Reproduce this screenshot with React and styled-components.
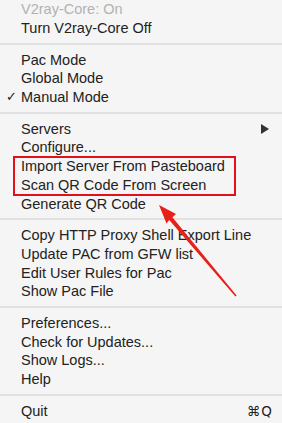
import { Fragment } from "react";
import styled, { createGlobalStyle } from "styled-components";

const GlobalStyle = createGlobalStyle`
  html, body {
    margin: 0;
    padding: 0;
    background: #f5f5f5;
  }
  body {
    font-family: "Liberation Sans", Arial, sans-serif;
    -webkit-font-smoothing: antialiased;
  }
`;

const Menu = styled.div`
  position: relative;
  width: 282px;
  height: 423px;
  display: flex;
  flex-direction: column;
  background: #f5f5f5;
  overflow: hidden;
`;

const Item = styled.div`
  height: 18.75px;
  display: flex;
  align-items: center;
  padding: 0 8px 0 21px;
  position: relative;
  font-size: 14.5px;
  color: ${(p) => (p.$disabled ? "#b2b2b2" : "#222")};
  white-space: nowrap;
`;

const Label = styled.span`
  flex: 1;
`;

const Check = styled.span`
  position: absolute;
  left: 6px;
  top: 1px;
  font-family: "DejaVu Sans", sans-serif;
  font-size: 13px;
  color: #222;
`;

const Shortcut = styled.span`
  font-family: "DejaVu Sans", "Liberation Sans", sans-serif;
  font-size: 13.5px;
  color: #222;
  letter-spacing: 1px;
  margin-right: 1px;
`;

const SubArrow = styled.span`
  width: 0;
  height: 0;
  margin-right: 5px;
  border-top: 5px solid transparent;
  border-bottom: 5px solid transparent;
  border-left: 8px solid #333;
`;

const Separator = styled.div`
  height: 12.75px;
  display: flex;
  align-items: center;

  &::before {
    content: "";
    display: block;
    width: 100%;
    height: 2px;
    background: #e1e1e1;
  }
`;

const Highlight = styled.div`
  position: relative;
  display: flex;
  flex-direction: column;

  &::after {
    content: "";
    position: absolute;
    left: 13px;
    width: 223px;
    top: -0.5px;
    bottom: -1.5px;
    box-sizing: border-box;
    border: 2px solid #e3101b;
    pointer-events: none;
  }
`;

const Overlay = styled.svg`
  position: absolute;
  top: 0;
  left: 0;
  pointer-events: none;
`;

const groups = [
  [
    { label: "V2ray-Core: On", disabled: true },
    { label: "Turn V2ray-Core Off" },
  ],
  [
    { label: "Pac Mode" },
    { label: "Global Mode" },
    { label: "Manual Mode", checked: true },
  ],
  [
    { label: "Servers", submenu: true },
    { label: "Configure..." },
    { label: "Import Server From Pasteboard", marked: true },
    { label: "Scan QR Code From Screen", marked: true },
    { label: "Generate QR Code" },
  ],
  [
    { label: "Copy HTTP Proxy Shell Export Line" },
    { label: "Update PAC from GFW list" },
    { label: "Edit User Rules for Pac" },
    { label: "Show Pac File" },
  ],
  [
    { label: "Preferences..." },
    { label: "Check for Updates..." },
    { label: "Show Logs..." },
    { label: "Help" },
  ],
  [{ label: "Quit", shortcut: "⌘Q" }],
];

function MenuItem({ item }) {
  return (
    <Item $disabled={item.disabled}>
      {item.checked && <Check>✓</Check>}
      <Label>{item.label}</Label>
      {item.submenu && <SubArrow />}
      {item.shortcut && <Shortcut>{item.shortcut}</Shortcut>}
    </Item>
  );
}

function Group({ items }) {
  const out = [];
  let i = 0;
  while (i < items.length) {
    if (items[i].marked) {
      const marked = [];
      while (i < items.length && items[i].marked) {
        marked.push(items[i]);
        i++;
      }
      out.push(
        <Highlight key={"h" + i}>
          {marked.map((m) => (
            <MenuItem key={m.label} item={m} />
          ))}
        </Highlight>
      );
    } else {
      out.push(<MenuItem key={items[i].label} item={items[i]} />);
      i++;
    }
  }
  return out;
}

function Arrow() {
  // tip at (159,205), tail at (236,296)
  return (
    <Overlay width="282" height="423" viewBox="0 0 282 423">
      <polygon
        points="159,205 176,214 172.4,217.2 236.6,295.6 235.4,296.4 169.2,220.1 166.5,223.5"
        fill="#e8201a"
      />
    </Overlay>
  );
}

export default function App() {
  return (
    <>
      <GlobalStyle />
      <Menu>
        {groups.map((g, idx) => (
          <Fragment key={idx}>
            {idx > 0 && <Separator />}
            <Group items={g} />
          </Fragment>
        ))}
        <Arrow />
      </Menu>
    </>
  );
}
